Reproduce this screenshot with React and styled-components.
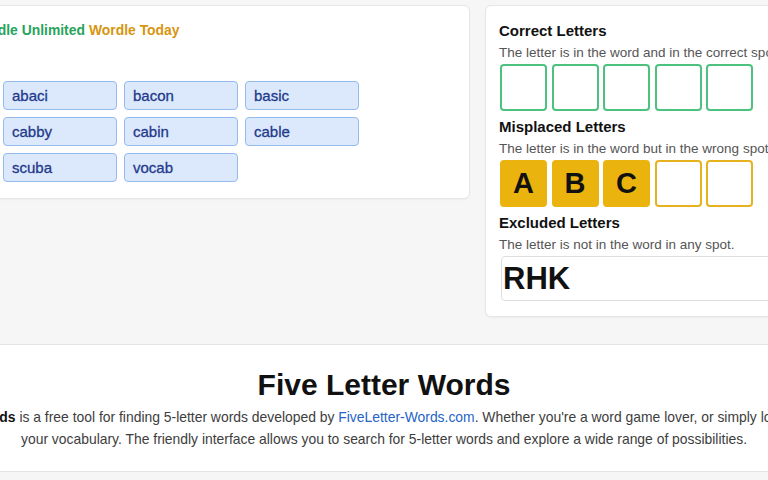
import React from 'react';
import styled, { createGlobalStyle } from 'styled-components';

const GlobalStyle = createGlobalStyle`
  html, body {
    margin: 0;
    padding: 0;
    background: #f6f6f6;
    overflow: hidden;
  }
  body {
    font-family: "Liberation Sans", Arial, Helvetica, sans-serif;
    color: #111;
  }
`;

const Page = styled.div`
  width: 1000px;
  margin: 0 auto;
  padding-top: 5px;
  position: relative;
  left: 50%;
  transform: translateX(-50%);
`;

const TopGrid = styled.div`
  display: grid;
  grid-template-columns: 586px 1fr;
  gap: 15px;
  align-items: start;
`;

const Card = styled.section`
  background: #fff;
  border: 1px solid #e6e6e6;
  border-radius: 6px;
  box-shadow: 0 1px 2px rgba(0, 0, 0, 0.04);
`;

const ResultsCard = styled(Card)`
  padding: 16px 10px 16px 5px;
`;

const LinkRow = styled.div`
  display: flex;
  gap: 4px;
  font-size: 13.9px;
  font-weight: 700;
  line-height: 16px;
  margin-left: -2px;
`;

const TopLink = styled.a`
  color: ${p => p.$color};
  text-decoration: none;
`;

const Results = styled.div`
  display: flex;
  margin-top: 43px;
`;

const CountLabel = styled.div`
  width: 113px;
  font-size: 13px;
  color: #666;
  padding-top: 7px;
`;

const WordGrid = styled.div`
  display: grid;
  grid-template-columns: repeat(3, 114px);
  gap: 7px;
`;

const WordButton = styled.button`
  height: 29px;
  padding: 0 8px;
  text-align: left;
  font-family: "Liberation Sans", Arial, sans-serif;
  font-size: 15px;
  color: #1f3a8a;
  background: #dce9fd;
  border: 1px solid #93bbee;
  border-radius: 4px;
  -webkit-text-stroke: 0.3px #1f3a8a;
`;

const FilterCard = styled(Card)`
  padding: 15px 14px 15px 13px;
  overflow: hidden;
`;

const SectionTitle = styled.h3`
  margin: ${p => (p.$first ? '0' : '6px')} 0 0;
  font-size: 15px;
  line-height: 20px;
  font-weight: 700;
  color: #111;
`;

const SectionHint = styled.p`
  margin: 3px 0 2px;
  font-size: 13.5px;
  line-height: 18px;
  color: #555;
  white-space: nowrap;
`;

const TileRow = styled.div`
  display: flex;
  gap: 4.5px;
  padding-left: 1px;
`;

const Tile = styled.div`
  width: 47px;
  height: 47px;
  box-sizing: border-box;
  border: 2px solid ${p => p.$border};
  background: ${p => p.$fill || '#fff'};
  border-radius: 4px;
  display: flex;
  align-items: center;
  justify-content: center;
  font-size: 29px;
  font-weight: 700;
  color: #111;
`;

const ExcludedInput = styled.div`
  margin-top: 1px;
  margin-left: 2px;
  height: 45px;
  box-sizing: border-box;
  border: 1px solid #dedede;
  border-radius: 4px;
  display: flex;
  align-items: center;
  padding-left: 1px;
  font-size: 31px;
  font-weight: 700;
  color: #111;
`;

const InfoBand = styled.section`
  margin-top: 27px;
  background: #fff;
  border-top: 1px solid #e4e4e4;
  border-bottom: 1px solid #e4e4e4;
  padding: 22px 0 21px;
  text-align: center;
`;

const InfoTitle = styled.h1`
  margin: 0;
  font-size: 30px;
  line-height: 36px;
  font-weight: 700;
  color: #111;
`;

const InfoText = styled.p`
  margin: 3px 0 0;
  font-size: 13.9px;
  line-height: 22px;
  color: #3d3d3d;
  white-space: nowrap;
  strong {
    color: #111;
  }
  a {
    color: #2563c9;
    text-decoration: none;
  }
`;

const words = ['abaci', 'bacon', 'basic', 'cabby', 'cabin', 'cable', 'scuba', 'vocab'];
const GREEN = '#4cc27e';
const ORANGE = '#e6b31e';
const ORANGE_FILL = '#ebb30d';

export default function App() {
  return (
    <>
      <GlobalStyle />
      <Page>
        <TopGrid>
          <ResultsCard>
            <LinkRow>
              <TopLink $color="#2563c9">Wordle Tips</TopLink>
              <TopLink $color="#27a35c">Wordle Unlimited</TopLink>
              <TopLink $color="#d6960f">Wordle Today</TopLink>
            </LinkRow>
            <Results>
              <CountLabel>8 words</CountLabel>
              <WordGrid>
                {words.map(w => (
                  <WordButton key={w}>{w}</WordButton>
                ))}
              </WordGrid>
            </Results>
          </ResultsCard>

          <FilterCard>
            <SectionTitle $first>Correct Letters</SectionTitle>
            <SectionHint>The letter is in the word and in the correct spot.</SectionHint>
            <TileRow>
              {[0, 1, 2, 3, 4].map(i => (
                <Tile key={i} $border={GREEN} />
              ))}
            </TileRow>

            <SectionTitle>Misplaced Letters</SectionTitle>
            <SectionHint>The letter is in the word but in the wrong spot.</SectionHint>
            <TileRow>
              {['A', 'B', 'C', '', ''].map((l, i) => (
                <Tile key={i} $border={l ? ORANGE_FILL : ORANGE} $fill={l ? ORANGE_FILL : null}>
                  {l}
                </Tile>
              ))}
            </TileRow>

            <SectionTitle>Excluded Letters</SectionTitle>
            <SectionHint>The letter is not in the word in any spot.</SectionHint>
            <ExcludedInput>RHK</ExcludedInput>
          </FilterCard>
        </TopGrid>

        <InfoBand>
          <InfoTitle>Five Letter Words</InfoTitle>
          <InfoText>
            <strong>Five Letter Words</strong> is a free tool for finding 5-letter words developed by{' '}
            <a>FiveLetter-Words.com</a>. Whether you're a word game lover, or simply looking to expand
            <br />
            your vocabulary. The friendly interface allows you to search for 5-letter words and explore a wide range of possibilities.
          </InfoText>
        </InfoBand>
      </Page>
    </>
  );
}
